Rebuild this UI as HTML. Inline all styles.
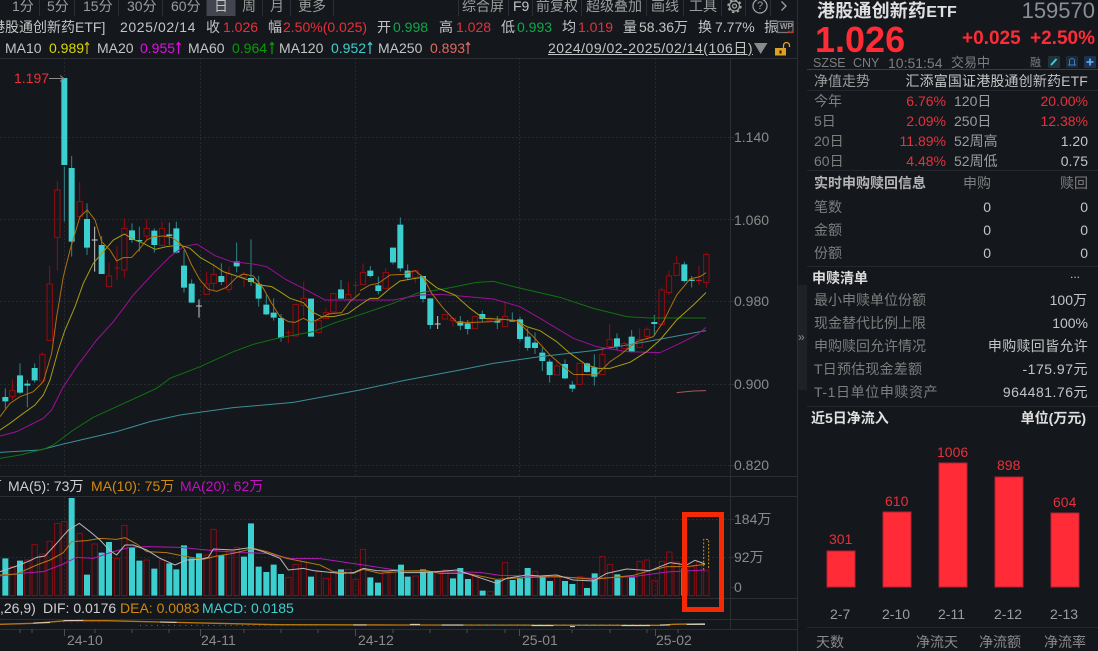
<!DOCTYPE html>
<html><head><meta charset="utf-8"><style>
html,body{margin:0;padding:0;background:#14171c;width:1098px;height:651px;overflow:hidden}
#p{position:relative;width:1098px;height:651px;overflow:hidden;font-family:"Liberation Sans","Noto Sans CJK SC",sans-serif;font-size:14px;color:#aaa}
svg{position:absolute;left:0;top:0}
.t{position:absolute;line-height:20px;height:20px;white-space:nowrap}
.r{color:#e8303a}.g{color:#0fa84a}.w{color:#c4c4c4}.d{color:#7e7e7e}.m{color:#9c9c9c}.a{color:#8a8a8a}
.b{font-weight:bold}
</style></head><body><div id="p">
<svg width="1098" height="651" viewBox="0 0 1098 651" fill="none">
<rect x="207" y="0" width="28" height="16" fill="#43464e"/>
<rect x="797" y="285" width="10" height="105" fill="#1e2126"/>
<g stroke="#26292e" stroke-width="1" stroke-dasharray="2 2">
<path d="M0 137.500H730M0 219.500H730M0 301.500H730M0 384.500H730M0 465.500H730M0 519.500H730M0 557.500H730"/>
<path d="M64.500 58V476M200.500 58V476M355.500 58V476M519.500 58V476M655.500 58V476M64.500 497V598M200.500 497V598M355.500 497V598M519.500 497V598M655.500 497V598"/>
</g>
<g stroke="#2b2e33" stroke-width="1">
<path d="M0 58.500H797M0 476.500H797M0 496.500H797M0 598.500H797M0 619.500H797M0 629.500H797"/>
<path d="M730.500 58V629M797.500 0V651"/>
<path d="M730 137.500h4M730 219.500h4M730 301.500h4M730 384.500h4M730 465.500h4M730 519.500h4M730 557.500h4M730 587.500h4"/>
<path d="M807 69.500H1098" stroke="#3a3d42"/>
<path d="M807 90.500H1098M807 170.500H1098M807 266.500H1098M807 406.500H1098M807 627.500H1098" stroke="#24272c"/>
<path d="M39.500 0V16M74.500 0V16M118.500 0V16M162.500 0V16M206.500 0V16M235.500 0V16M262.500 0V16M290.500 0V16M333.500 0V16M458.500 0V16M508.500 0V16M532.500 0V16M581.500 0V16M646.500 0V16M683.500 0V16M721.500 0V16M745.500 0V16M770.500 0V16"/>
<path d="M20 629v4M32 629v4M64.500 629v7M95 629v4M132 629v4M169 629v4M200.500 629v7M244 629v4M281 629v4M318 629v4M355.500 629v7M393 629v4M430 629v4M467 629v4M505 629v4M519.500 629v7M572 629v4M610 629v4M647 629v4M655.500 629v7M678 629v4" stroke="#4a4d52"/>
</g>

<!-- candles, left half -->
<g transform="translate(0,200) scale(.33333)" fill="none">
<path stroke="#2f8688" stroke-width="3" d="M16 565V625M60 490V582M82 540V622M104 490V548M193 -100V65M215 -132V170M261 10V165M305 108V222M396 70V128M418 80V155M463 85V158M508 68V135M529 65V160M552 150V278M575 238V308M664 190V255M710 128V217M753 118V258M776 228V320M799 285V345M821 295V362M843 342V425M933 296V410M1023 240V296"/>
<path stroke="#3ccfd0" stroke-width="18" d="M16 591V604M60 526V578M82 551V557M104 504V541M193 -366V-105M215 -96V125M261 57V143M305 135V222M396 91V120M418 120V124M463 92V135M508 103V108M529 85V158M552 197V263M575 251V308M664 228V246M710 184V199M753 234V246M776 252V296M799 314V343M821 338V353M843 354V414M933 296V410M1023 268V296"/>
<path stroke="#980b0f" stroke-width="3" d="M37 538V572h8V590h-16V572h8M37 590V600M127 458V464h8V543h-16V464h8M149 198V252h8V421h-16V252h8M172 -57V-30h8V112h-16V-30h8M172 112V212M239 -54V5h8V50h-16V5h8M327 188V228h8V260h-16V228h8M351 138V204h8h-16h8V240M373 55V85h8V210h-16V85h8M373 210V232M440 58V85h8V108h-16V85h8M440 108V125M486 65V85h8V136h-16V85h8M620 215V252h8V283h-16V252h8M641 190V223h8V250h-16V223h8M641 250V270M687 200V222h8V268h-16V222h8M687 268V278M732 215V223h8V232h-16V223h8M732 232V262M865 390V398h8h-16h8V430M887 313h8V408h-16V313h8M911 245V295h8V316h-16V295h8M911 316V350M956 362h8V397h-16V362h8M978 325V338h8V356h-16V338h8M1000 281h8V336h-16V281h8M1000 336V340M1045 245V284h8V298h-16V284h8M1067 243V256h8h-16h8V290"/>
<path stroke="#c8c8c8" stroke-width="3" d="M284 80V215M275 120H293M597 298V353M588 318H606"/>
<path stroke="#3a8f96" stroke-width="3" d="M0 757L120 750L190 732L350 695L450 665L540 645L700 623L880 607L1080 570"/>
<path stroke="#0f740f" stroke-width="3" d="M0 775L60 765L130 748L160 735L220 690L280 652L350 620L470 565L510 535L600 500L700 455L760 433L840 413L940 395L1000 370L1080 344"/>
<path stroke="#a00f9a" stroke-width="3" d="M0 708L50 695L130 655L155 630L190 560L230 500L290 420L340 365L400 285L460 220L510 170L550 140L590 132L645 167L695 185L760 192L800 200L860 240L910 265L975 300L1080 300"/>
<path stroke="#a89c12" stroke-width="3" d="M0 690L30 670L70 640L105 615L130 585L150 540L175 450L195 390L225 320L250 250L280 190L310 155L340 120L373 102L400 118L430 130L465 148L500 140L540 135L570 145L600 172L640 195L670 215L710 228L745 240L780 255L815 260L840 275L870 295L910 308L935 335L965 350L1000 350L1045 340L1080 315"/>
<path stroke="#b0700f" stroke-width="3" d="M0 650L30 610L60 590L100 575L130 545L155 460L170 350L190 230L210 150L240 50L262 30L285 60L305 125L330 150L350 183L370 173L395 172L420 145L440 120L460 110L490 108L515 112L540 130L555 150L575 195L600 240L625 268L650 274L680 262L710 232L730 222L760 228L790 265L815 310L840 350L865 365L885 367L910 355L935 367L960 355L985 342L1025 338L1050 305L1080 280"/>
</g>

<!-- candles, right half -->
<g transform="translate(360,200) scale(.33333)" fill="none">
<path stroke="#2f8688" stroke-width="3" d="M31 198V232M55 230V283M99 143V193M121 52V215M143 193V240M189 228V308M211 295V387M301 348V390M323 360V403M367 332V365M412 348V387M457 337V365M480 350V425M503 385V452M525 397V462M547 443V513M569 478V548M615 478V537M637 543V576M681 488V518M703 463V557M771 400V450M815 390V458M883 345V405M973 185V248M995 228V262"/>
<path stroke="#3ccfd0" stroke-width="18" d="M31 212V228M55 256V273M99 143V187M121 74V205M143 212V233M189 228V297M211 295V375M301 364V377M323 370V387M367 342V357M412 362V368M457 360V365M480 358V417M503 410V444M525 428V444M547 458V483M569 485V525M615 492V535M637 554V566M681 490V516M703 502V530M771 415V440M815 410V455M883 366V372M973 193V243M995 239V243"/>
<path stroke="#980b0f" stroke-width="3" d="M9 190V217h8V254h-16V217h8M77 205V218h8V265h-16V218h8M166 210V212h8V232h-16V212h8M166 232V250M255 343V344h8V357h-16V344h8M279 355h8V362h-16V355h8M279 362V380M345 350h8V386h-16V350h8M389 350V355h8V362h-16V355h8M435 308V349h8V380h-16V349h8M591 485V498h8V525h-16V498h8M659 490h8V553h-16V490h8M727 445V463h8V524h-16V463h8M749 372V418h8V440h-16V418h8M793 425V430h8V445h-16V430h8M839 385V418h8V442h-16V418h8M861 382V388h8V409h-16V388h8M861 409V420M905 262V270h8V374h-16V270h8M927 212V228h8V277h-16V228h8M927 277V285M950 168V190h8V226h-16V190h8M1017 198V255M1039 158V164h8V247h-16V164h8M1039 247V263"/>
<path stroke="#e01820" stroke-width="3" d="M1008 241H1026"/>
<path stroke="#c8c8c8" stroke-width="3" d="M233 348V387M224 372H242"/>
<path stroke="#a85a55" stroke-width="3" d="M950 578L1000 573L1038 572"/>
<path stroke="#3a8f96" stroke-width="3" d="M0 570L130 542L300 510L400 490L540 470L700 452L860 425L1038 392"/>
<path stroke="#0f740f" stroke-width="3" d="M0 344L100 310L170 280L260 265L350 247L400 244L470 262L600 292L700 325L800 350L870 354L1038 354"/>
<path stroke="#a00f9a" stroke-width="3" d="M0 300L100 300L180 285L240 283L300 288L400 297L480 320L540 355L640 415L710 440L800 455L900 458L960 430L1010 405L1038 382"/>
<path stroke="#a89c12" stroke-width="3" d="M0 315L30 295L55 295L90 265L120 243L165 235L190 232L230 263L285 285L330 325L370 355L430 358L470 362L500 380L540 392L590 425L630 460L680 495L715 505L750 505L810 487L860 455L900 420L950 360L1000 315L1038 278"/>
<path stroke="#b0700f" stroke-width="3" d="M0 272L30 255L55 250L90 225L130 223L165 212L190 232L215 280L250 325L290 367L340 367L400 365L430 358L470 362L520 410L570 465L610 500L640 523L680 524L710 525L730 505L750 485L780 465L830 425L880 410L910 365L950 285L990 237L1020 230L1038 218"/>
</g>

<!-- 1.197 pointer -->
<path d="M49 78.500H64M60 75.500L64 78.500L60 81.500" stroke="#8a8a8a" stroke-width="1"/>

<!-- volume left -->
<g transform="translate(0,470) scale(.33333)" fill="none">
<path stroke="#3ccfd0" stroke-width="18" d="M16 265V377M60 272V377M215 84V377M261 314V377M305 248V377M327 216V377M396 232V377M418 272V377M463 296V377M508 280V377M529 298V377M552 226V377M575 265V377M597 250V377M664 255V377M732 260V377M753 160V377M776 290V377M799 306V377M821 284V377M843 312V377M933 320V377M1023 298V377M1111 322V377M1134 338V377"/>
<path stroke="#8e0b10" stroke-width="3" d="M37 290h8V377h-16V290h8M82 270h8V377h-16V270h8M104 224h8V377h-16V224h8M127 252h8V377h-16V252h8M149 214h8V377h-16V214h8M172 160h8V377h-16V160h8M193 155h8V377h-16V155h8M239 190h8V377h-16V190h8M284 222h8V377h-16V222h8M351 265h8V377h-16V265h8M373 166h8V377h-16V166h8M440 270h8V377h-16V270h8M486 270h8V377h-16V270h8M620 255h8V377h-16V255h8M641 178h8V377h-16V178h8M687 240h8V377h-16V240h8M710 232h8V377h-16V232h8M865 322h8V377h-16V322h8M887 283h8V377h-16V283h8M911 275h8V377h-16V275h8M956 305h8V377h-16V305h8M978 325h8V377h-16V325h8M1000 305h8V377h-16V305h8M1045 298h8V377h-16V298h8M1067 328h8V377h-16V328h8M1089 238h8V377h-16V238h8M1156 305h8V377h-16V305h8M1178 300h8V377h-16V300h8"/>
<path stroke="#b01ab0" stroke-width="3" d="M0 318L60 310L130 305L190 282L230 262L280 265L340 245L390 232L440 230L540 232L640 242L720 248L800 250L870 265L960 266L1090 285L1200 302"/>
<path stroke="#b8780f" stroke-width="3" d="M0 315L50 312L110 285L150 270L190 248L215 215L260 212L300 205L350 208L375 203L410 222L440 245L500 248L550 258L610 268L650 258L700 250L760 235L800 245L860 265L960 285L1000 305L1060 310L1090 298L1140 310L1200 305"/>
<path stroke="#b8b8b8" stroke-width="3" d="M0 305L50 288L90 272L110 262L135 258L170 220L205 180L238 160L270 185L300 210L330 242L350 255L375 225L400 225L440 240L480 265L525 285L560 270L600 268L625 262L640 237L700 240L750 233L790 245L840 265L865 300L910 295L940 302L1020 310L1060 308L1090 295L1130 302L1160 303L1200 300"/>
<path stroke-width="4" stroke="#b8780f" d="M0 463L100 460L200 452L320 452L480 456L650 460L830 464L1200 465"/>
<path stroke-width="3" stroke="#d8d0c0" d="M100 459L150 458M190 452L250 451M480 456L530 457M1060 465L1100 465"/>
<path stroke-width="3" stroke="#8e1010" stroke-dasharray="3 18" d="M190 458H300"/>
<path stroke-width="3" stroke="#2f8688" stroke-dasharray="3 14" d="M420 466H950"/>
</g>

<!-- volume right -->
<g transform="translate(400,470) scale(.33333)" fill="none">
<path stroke="#3ccfd0" stroke-width="18" d="M3 284V377M23 320V377M69 298V377M91 305V377M159 325V377M181 294V377M204 327V377M248 362V377M293 330V377M338 330V377M360 325V377M383 294V377M428 318V377M450 333V377M495 333V377M517 342V377M561 354V377M584 310V377M652 313V377M696 322V377"/>
<path stroke="#a8a8a8" stroke-width="18" d="M853 295V377"/>
<path stroke="#8e0b10" stroke-width="3" d="M47 318h8V377h-16V318h8M113 305h8V377h-16V305h8M136 300h8V377h-16V300h8M226 318h8V377h-16V318h8M271 365h8V377h-16V365h8M315 278h8V377h-16V278h8M405 305h8V377h-16V305h8M472 320h8V377h-16V320h8M540 320h8V377h-16V320h8M607 260h8V377h-16V260h8M630 283h8V377h-16V283h8M674 320h8V377h-16V320h8M719 274h8V377h-16V274h8M741 270h8V377h-16V270h8M764 332h8V377h-16V332h8M786 274h8V377h-16V274h8M808 246h8V377h-16V246h8M830 276h8V377h-16V276h8M875 290h8V377h-16V290h8M897 275h8V377h-16V275h8M919 303h8V377h-16V303h8"/>
<path stroke="#c8901a" stroke-width="3" stroke-dasharray="6 5" d="M911 300V208H926V300"/>
<path stroke="#b01ab0" stroke-width="3" d="M0 303L240 307L300 316L400 318L580 325L700 320L800 306L915 300"/>
<path stroke="#b8780f" stroke-width="3" d="M0 303L80 302L120 310L200 310L290 328L380 322L480 320L580 328L700 316L750 302L800 290L860 290L915 283"/>
<path stroke="#b8b8b8" stroke-width="3" d="M0 308L60 308L110 305L170 300L230 320L290 340L320 325L380 315L420 318L470 315L520 330L580 333L620 310L680 297L750 302L810 278L860 285L885 271L915 282"/>
<path stroke-width="4" stroke="#b8780f" d="M0 465L780 466L820 463L915 461"/>
<path stroke-width="3" stroke="#e0d8c8" d="M30 463H60M125 465H190M395 467H460M510 470H525M665 467H750M780 465H810M860 463H915"/>
<path stroke-width="3" stroke="#2f8688" stroke-dasharray="3 20" d="M190 464H760"/>
</g>

<!-- highlight box -->
<rect x="684.500" y="514.500" width="37" height="95" fill="none" stroke="#f52a05" stroke-width="5"/>

<!-- MA arrows -->
<g stroke-width="1.200" fill="none">
<path d="M87 54V43M85 45L87 42.500L89 45" stroke="#c8b818"/>
<path d="M178.500 54V43M176.500 45L178.500 42.500L180.500 45" stroke="#d810d8"/>
<path d="M272 54V43M270 45L272 42.500L274 45" stroke="#0f9a0f"/>
<path d="M370 54V43M368 45L370 42.500L372 45" stroke="#40cccc"/>
<path d="M468 54V43M466 45L468 42.500L470 45" stroke="#e06a60"/>
</g>

<!-- toolbar icons -->
<g stroke="#a0a0a0" stroke-width="1.300" fill="none">
<circle cx="734.500" cy="6" r="5"/>
<circle cx="734.500" cy="6" r="6.300" stroke-width="1.800" stroke-dasharray="2.500 2.450"/>
<circle cx="734.500" cy="6" r="2"/>
<circle cx="760" cy="6" r="7"/>
<path d="M781.500 1.500L786 6L781.500 10.500"/>
</g>
<!-- wp icon -->
<path d="M777.500 21.500H793V32.500H777.500Z" stroke="#777" stroke-width="1.200" fill="#1c1f24"/>
<circle cx="789" cy="32" r="1.200" fill="#d02020"/><circle cx="792" cy="32" r="1.200" fill="#d02020"/>
<!-- dropdown triangle -->
<path d="M754 43H767.500L760.700 54Z" fill="#8a8a8a"/>
<!-- lock -->
<rect x="775" y="48" width="11" height="7.500" fill="#e0a020"/>
<rect x="779.500" y="50.500" width="2" height="3" fill="#14171c"/>
<path d="M783.500 48V45.500A3 3 0 0 1 789.500 45.500V47" stroke="#e0a020" stroke-width="1.300" fill="none"/>

<!-- panel small icons -->
<rect x="1048" y="56" width="12" height="12" rx="1.500" fill="#20323a"/>
<path d="M1051 65L1056.500 59" stroke="#45c8d8" stroke-width="2"/>
<rect x="1066" y="56" width="12" height="12" rx="1.500" fill="#1c2a3c"/>
<path d="M1068 65H1076M1069.500 65V61A2.500 2.500 0 0 1 1074.500 61V65" stroke="#3a7fc0" stroke-width="1" fill="none"/>
<rect x="1084" y="56" width="12" height="12" rx="1.500" fill="#1c3250"/>
<path d="M1090 58.500V65.500M1086.500 62H1093.500" stroke="#5aa8ec" stroke-width="1.800"/>

<!-- net flow bars -->
<g fill="#ff2b37" stroke="#b82030" stroke-width="1">
<rect x="827" y="551" width="28" height="36"/>
<rect x="883" y="512" width="28" height="75"/>
<rect x="939" y="463" width="28" height="124"/>
<rect x="995" y="477" width="28" height="110"/>
<rect x="1051" y="513" width="28" height="74"/>
</g>
</svg>

<!-- toolbar -->
<span class="t m" style="left:12px;top:-4px">1分</span>
<span class="t m" style="left:47px;top:-4px">5分</span>
<span class="t m" style="left:83px;top:-4px">15分</span>
<span class="t m" style="left:127px;top:-4px">30分</span>
<span class="t m" style="left:171px;top:-4px">60分</span>
<span class="t w" style="left:214px;top:-4px">日</span>
<span class="t m" style="left:242px;top:-4px">周</span>
<span class="t m" style="left:270px;top:-4px">月</span>
<span class="t m" style="left:298px;top:-4px">更多</span>
<span class="t m" style="left:462px;top:-4px">综合屏</span>
<span class="t w" style="left:513px;top:-4px">F9</span>
<span class="t m" style="left:536px;top:-4px">前复权</span>
<span class="t m" style="left:586px;top:-4px">超级叠加</span>
<span class="t m" style="left:651px;top:-4px">画线</span>
<span class="t m" style="left:689px;top:-4px">工具</span>
<span class="t" style="left:757px;top:-4px;font-size:11px;color:#a0a0a0">?</span>

<!-- row 2 -->
<span class="t w" style="left:-9px;top:17px">港股通创新药ETF]</span>
<span class="t w" style="left:120px;top:17px;letter-spacing:.6px">2025/02/14</span>
<span class="t w" style="left:206px;top:17px">收</span>
<span class="t r" style="left:223px;top:17px">1.026</span>
<span class="t w" style="left:268px;top:17px">幅</span>
<span class="t r" style="left:283px;top:17px">2.50%(0.025)</span>
<span class="t w" style="left:377px;top:17px">开</span>
<span class="t g" style="left:393px;top:17px">0.998</span>
<span class="t w" style="left:439px;top:17px">高</span>
<span class="t r" style="left:456px;top:17px">1.028</span>
<span class="t w" style="left:501px;top:17px">低</span>
<span class="t g" style="left:517px;top:17px">0.993</span>
<span class="t w" style="left:562px;top:17px">均</span>
<span class="t r" style="left:578px;top:17px">1.019</span>
<span class="t w" style="left:623px;top:17px">量</span>
<span class="t w" style="left:639px;top:17px">58.36万</span>
<span class="t w" style="left:698px;top:17px">换</span>
<span class="t w" style="left:715px;top:17px">7.77%</span>
<span class="t w" style="left:764px;top:17px">振</span>
<span class="t" style="left:780px;top:17px;font-size:8px;color:#999;font-weight:bold">WP</span>

<!-- row 3 -->
<span class="t w" style="left:5px;top:38px">MA10</span>
<span class="t" style="left:49px;top:38px;color:#d8d800">0.989</span>
<span class="t w" style="left:97px;top:38px">MA20</span>
<span class="t" style="left:140px;top:38px;color:#e010e0">0.955</span>
<span class="t w" style="left:188px;top:38px">MA60</span>
<span class="t" style="left:232px;top:38px;color:#0a9a0a">0.964</span>
<span class="t w" style="left:279px;top:38px">MA120</span>
<span class="t" style="left:331px;top:38px;color:#40d0d0">0.952</span>
<span class="t w" style="left:378px;top:38px">MA250</span>
<span class="t" style="left:430px;top:38px;color:#e06a60">0.893</span>
<span class="t w" style="left:548px;top:38px;text-decoration:underline;letter-spacing:.5px">2024/09/02-2025/02/14(106日)</span>

<span class="t r" style="left:14px;top:68px">1.197</span>

<!-- price axis -->
<span class="t a" style="left:734px;top:127px">1.140</span>
<span class="t a" style="left:734px;top:210px">1.060</span>
<span class="t a" style="left:734px;top:291px">0.980</span>
<span class="t a" style="left:734px;top:374px">0.900</span>
<span class="t a" style="left:734px;top:455px">0.820</span>
<span class="t a" style="left:734px;top:509px">184万</span>
<span class="t a" style="left:734px;top:547px">92万</span>
<span class="t a" style="left:734px;top:577px">0</span>

<!-- volume + macd labels -->
<span class="t w" style="left:-12px;top:476px">万</span>
<span class="t" style="left:8px;top:476px;color:#d0d0d0">MA(5): 73万</span>
<span class="t" style="left:91px;top:476px;color:#d08a10">MA(10): 75万</span>
<span class="t" style="left:180px;top:476px;color:#c010c0">MA(20): 62万</span>
<span class="t" style="left:0;top:598px;color:#d0d0d0">,26,9)</span>
<span class="t" style="left:43px;top:598px;color:#d0d0d0">DIF: 0.0176</span>
<span class="t" style="left:120px;top:598px;color:#d08a10">DEA: 0.0083</span>
<span class="t" style="left:202px;top:598px;color:#40d0d0">MACD: 0.0185</span>

<!-- date axis -->
<span class="t a" style="left:67px;top:630px">24-10</span>
<span class="t a" style="left:201px;top:630px">24-11</span>
<span class="t a" style="left:358px;top:630px">24-12</span>
<span class="t a" style="left:522px;top:630px">25-01</span>
<span class="t a" style="left:656px;top:630px">25-02</span>
<span class="t" style="left:798px;top:327px;font-size:12px;color:#8a8a8a">»</span>

<!-- right panel header -->
<span class="t b" style="left:817px;top:1px;font-size:18px;color:#e0e0e0;letter-spacing:.2px">港股通创新药<span style="font-size:16px">ETF</span></span>
<span class="t" style="right:3px;top:1px;font-size:22px;color:#8a8f95">159570</span>
<span class="t b" style="left:815px;top:30px;font-size:36px;color:#ff2b35">1.026</span>
<span class="t b" style="left:962px;top:29px;font-size:19px;color:#ff2b35">+0.025</span>
<span class="t b" style="right:3px;top:29px;font-size:19px;color:#ff2b35">+2.50%</span>
<span class="t d" style="left:813px;top:53px;font-size:12.500px">SZSE</span>
<span class="t d" style="left:853px;top:53px;font-size:12.500px">CNY</span>
<span class="t d" style="left:888px;top:53px">10:51:54</span>
<span class="t d" style="left:951px;top:53px;font-size:13px">交易中</span>
<span class="t d" style="left:1030px;top:53px;font-size:11px">融</span>

<span class="t m" style="left:814px;top:71px">净值走势</span>
<span class="t w" style="right:10px;top:71px;letter-spacing:.15px">汇添富国证港股通创新药ETF</span>

<span class="t d" style="left:814px;top:91px">今年</span><span class="t r" style="right:152px;top:91px">6.76%</span><span class="t m" style="left:954px;top:91px">120日</span><span class="t r" style="right:10px;top:91px">20.00%</span>
<span class="t d" style="left:814px;top:111px">5日</span><span class="t r" style="right:152px;top:111px">2.09%</span><span class="t m" style="left:954px;top:111px">250日</span><span class="t r" style="right:10px;top:111px">12.38%</span>
<span class="t d" style="left:814px;top:131px">20日</span><span class="t r" style="right:152px;top:131px">11.89%</span><span class="t m" style="left:954px;top:131px">52周高</span><span class="t w" style="right:10px;top:131px">1.20</span>
<span class="t d" style="left:814px;top:151px">60日</span><span class="t r" style="right:152px;top:151px">4.48%</span><span class="t m" style="left:954px;top:151px">52周低</span><span class="t w" style="right:10px;top:151px">0.75</span>

<span class="t b" style="left:814px;top:173px;color:#b4b4b4">实时申购赎回信息</span>
<span class="t d" style="right:107px;top:173px">申购</span><span class="t d" style="right:10px;top:173px">赎回</span>
<span class="t d" style="left:814px;top:197px">笔数</span><span class="t w" style="right:107px;top:197px">0</span><span class="t w" style="right:10px;top:197px">0</span>
<span class="t d" style="left:814px;top:220px">金额</span><span class="t w" style="right:107px;top:220px">0</span><span class="t w" style="right:10px;top:220px">0</span>
<span class="t d" style="left:814px;top:243px">份额</span><span class="t w" style="right:107px;top:243px">0</span><span class="t w" style="right:10px;top:243px">0</span>

<span class="t b" style="left:812px;top:268px;color:#dcdcdc">申赎清单</span>
<span class="t w" style="left:1070px;top:264px;font-size:12px">...</span>
<span class="t d" style="left:814px;top:290px">最小申赎单位份额</span><span class="t w" style="right:11px;top:290px">100万</span>
<span class="t d" style="left:814px;top:313px">现金替代比例上限</span><span class="t w" style="right:10px;top:313px">100%</span>
<span class="t d" style="left:814px;top:336px">申购赎回允许情况</span><span class="t w" style="right:10px;top:336px;letter-spacing:.3px">申购赎回皆允许</span>
<span class="t d" style="left:814px;top:359px;letter-spacing:.2px">T日预估现金差额</span><span class="t w" style="right:10px;top:359px;letter-spacing:.5px">-175.97元</span>
<span class="t d" style="left:814px;top:382px;letter-spacing:.6px">T-1日单位申赎资产</span><span class="t w" style="right:10px;top:382px;letter-spacing:.5px">964481.76元</span>

<span class="t b" style="left:811px;top:408px;color:#e0e0e0">近5日净流入</span>
<span class="t b" style="right:12px;top:408px;color:#e0e0e0">单位(万元)</span>

<span class="t r" style="left:829px;top:529px">301</span>
<span class="t r" style="left:885px;top:491px">610</span>
<span class="t r" style="left:937px;top:442px">1006</span>
<span class="t r" style="left:997px;top:455px">898</span>
<span class="t r" style="left:1053px;top:492px">604</span>
<span class="t m" style="left:830px;top:604px">2-7</span>
<span class="t m" style="left:882px;top:604px">2-10</span>
<span class="t m" style="left:938px;top:604px">2-11</span>
<span class="t m" style="left:994px;top:604px">2-12</span>
<span class="t m" style="left:1050px;top:604px">2-13</span>
<span class="t a" style="left:816px;top:632px">天数</span>
<span class="t a" style="left:916px;top:632px">净流天</span>
<span class="t a" style="left:979px;top:632px">净流额</span>
<span class="t a" style="left:1044px;top:632px">净流率</span>
</div></body></html>
